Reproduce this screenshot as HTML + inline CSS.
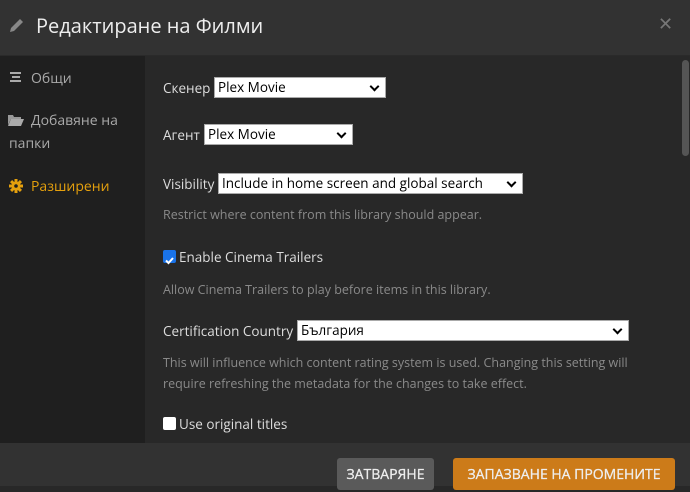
<!DOCTYPE html>
<html><head><meta charset="utf-8"><style>
*{box-sizing:border-box;margin:0;padding:0}
body{width:690px;height:486px;overflow:hidden;background:#282828;font-family:"Open Sans","Liberation Sans","DejaVu Sans",sans-serif;position:relative;color:#eee}
.hdr{position:absolute;left:0;top:0;width:690px;height:56px;background:#323232;border-bottom:1px solid #2a2a2a}
.hdr h1{position:absolute;left:36px;top:12px;font-size:20px;font-weight:normal;color:#eee}
.x{position:absolute;left:658px;top:12px;font-size:18px;color:#777}
.side{position:absolute;left:0;top:56px;width:145px;height:387px;background:#1f1f1f}
.si{position:absolute;left:9px;font-size:14px;color:#aaa;line-height:23px}
.main{position:absolute;left:145px;top:56px;width:545px;height:387px;background:#282828}
.t{position:absolute;left:18px;font-size:13.5px;color:#ddd;white-space:nowrap}
.h{position:absolute;left:18px;font-size:12.5px;color:#8a8a8a;line-height:21px}
.sel{position:absolute;background:#fff;border:1px solid #aaa;color:#000;font-size:13.5px;height:21px;padding-left:3px;line-height:19px}
.sel:after{content:"";position:absolute;right:7px;top:5px;width:5px;height:5px;border-right:2px solid #000;border-bottom:2px solid #000;transform:rotate(45deg)}
.cb{position:absolute;left:18px;width:13px;height:13px;border-radius:2px}
.foot{position:absolute;left:0;top:443px;width:690px;height:43px;background:#323232}
.btn{position:absolute;top:15px;height:32px;border-radius:3px;font-size:14px;text-align:center;line-height:34px;color:#eee;-webkit-text-stroke:0.3px #eee}
.sb{position:absolute;left:682px;top:60px;width:7px;height:96px;background:#555;border-radius:4px}
</style></head><body>
<div class="hdr">
<svg style="position:absolute;left:8px;top:16px" width="18" height="18" viewBox="0 0 18 18"><path d="M2 16 L3 12 L12 3 L15 6 L6 15 Z" fill="#888"/></svg>
<h1>Редактиране на Филми</h1><div class="x">✕</div></div>
<div class="side">
<svg style="position:absolute;left:9px;top:16px" width="13" height="12"><rect x="1" y="0" width="11" height="2" fill="#aaa"/><rect x="3" y="4" width="8" height="2" fill="#aaa"/><rect x="1" y="8" width="11" height="2" fill="#aaa"/></svg>
<div class="si" style="left:31px;top:11px">Общи</div>
<svg style="position:absolute;left:8px;top:58px" width="16" height="12"><path d="M0 1h5l1 2h7v2H3L0 11Z" fill="#999"/><path d="M3 5h13l-3 7H0Z" fill="#aaa"/></svg>
<div class="si" style="top:53px;text-indent:22px">Добавяне на<br>папки</div>
<svg style="position:absolute;left:9px;top:123px" width="14" height="14" viewBox="0 0 14 14"><g fill="#e5a00d"><circle cx="7" cy="7" r="4.5"/><rect x="5.5" y="0" width="3" height="14"/><rect x="0" y="5.5" width="14" height="3"/><rect x="5.5" y="0" width="3" height="14" transform="rotate(45 7 7)"/><rect x="5.5" y="0" width="3" height="14" transform="rotate(-45 7 7)"/></g><circle cx="7" cy="7" r="1.8" fill="#1f1f1f"/></svg>
<div class="si" style="left:31px;top:119px;color:#e5a00d">Разширени</div>
</div>
<div class="main">
<div class="t" style="top:23px">Скенер</div><div class="sel" style="left:69px;top:21px;width:172px">Plex Movie</div>
<div class="t" style="top:70px">Агент</div><div class="sel" style="left:59px;top:68px;width:149px">Plex Movie</div>
<div class="t" style="top:119px">Visibility</div><div class="sel" style="left:73px;top:117px;width:305px">Include in home screen and global search</div>
<div class="h" style="top:148px">Restrict where content from this library should appear.</div>
<div class="cb" style="top:194px;background:#1a73e8"><svg width="13" height="13"><path d="M3 6.5l2.5 2.5 4.5-5" stroke="#fff" stroke-width="2" fill="none"/></svg></div>
<div class="t" style="left:34px;top:192px">Enable Cinema Trailers</div>
<div class="h" style="top:223px">Allow Cinema Trailers to play before items in this library.</div>
<div class="t" style="top:266px">Certification Country</div><div class="sel" style="left:152px;top:264px;width:332px">България</div>
<div class="h" style="top:296px">This will influence which content rating system is used. Changing this setting will<br>require refreshing the metadata for the changes to take effect.</div>
<div class="cb" style="top:361px;background:#fff"></div>
<div class="t" style="left:34px;top:359px">Use original titles</div>
</div>
<div class="sb"></div>
<div class="foot">
<div class="btn" style="left:337px;width:97px;background:#5a5a5a">ЗАТВАРЯНЕ</div>
<div class="btn" style="left:453px;width:222px;background:#cc7b19">ЗАПАЗВАНЕ НА ПРОМЕНИТЕ</div>
</div>
</body></html>
